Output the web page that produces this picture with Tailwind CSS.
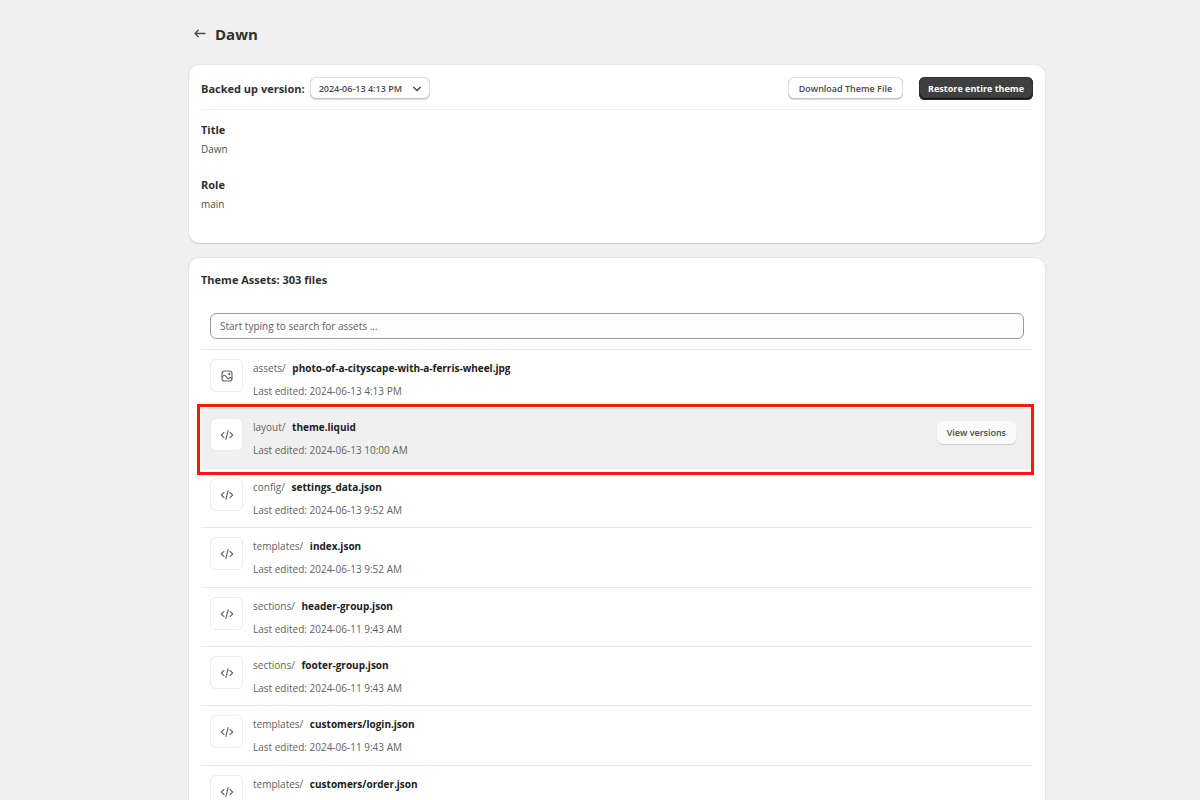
<!DOCTYPE html>
<html lang="en">
<head>
<meta charset="utf-8">
<meta name="viewport" content="width=device-width, initial-scale=1">
<title>Dawn</title>
<script src="https://cdn.jsdelivr.net/npm/@tailwindcss/browser@4"></script>
</head>
<body class="h-screen overflow-hidden bg-[#f0f0f0] pl-[34px] font-['Open_Sans','Noto_Sans',sans-serif] text-[10px] leading-4 text-[#303030]">
<svg class="hidden">
  <symbol id="code" viewBox="0 0 14 14" fill="none" stroke="currentColor" stroke-width="1.1" stroke-linecap="round" stroke-linejoin="round">
    <path d="M4 4.4 1.3 7 4 9.6M10 4.4 12.7 7 10 9.6M8.1 2.6 5.9 11.4"/>
  </symbol>
  <symbol id="image" viewBox="0 0 14 14" fill="none" stroke="currentColor" stroke-width="1.1" stroke-linecap="round" stroke-linejoin="round">
    <rect x="2" y="2" width="10" height="10" rx="2.6"/>
    <path d="M2.2 7.8 3.6 6.6c.5-.4 1.1-.4 1.5 0l2.6 2.7c.4.4 1 .4 1.4 0l.5-.5c.4-.4 1-.4 1.4 0l.9.8"/>
    <path d="M9.3 4.1v1.8M8.4 5h1.8"/>
  </symbol>
</svg>
<main class="mx-auto w-full max-w-[856px] pt-6">
  <header class="flex h-5 items-center gap-2 pl-1">
    <a href="#" aria-label="Back" class="text-[#4a4a4a]">
      <svg class="h-[14px] w-[14px]" viewBox="0 0 14 14" fill="none" stroke="currentColor" stroke-width="1.3" stroke-linecap="round" stroke-linejoin="round"><path d="M12 6.5H2M5.2 3.3 2 6.5l3.2 3.2"/></svg>
    </a>
    <h1 class="text-[15px] font-bold leading-5">Dawn</h1>
  </header>

  <section class="mt-[21px] rounded-[10px] bg-white px-3 pt-3 pb-[31px] shadow-[0_1px_1px_#cfcfcf,0_0_0_1px_#e6e6e6]">
    <div class="flex items-center border-b border-[#f0f0f0] pb-[9px]">
      <label for="version" class="text-[11px] font-bold">Backed up version:</label>
      <div class="relative ml-[5px]">
        <select id="version" class="h-[23px] w-[120px] appearance-none rounded-md bg-white pl-[9px] text-[9px] font-semibold text-[#4a4a4a] shadow-[inset_0_0_0_1px_#dedede,inset_0_-1px_0_1px_#c4c4c4]">
          <option>2024-06-13 4:13 PM</option>
        </select>
        <svg class="pointer-events-none absolute top-[7px] right-2 h-[10px] w-[10px] text-[#4a4a4a]" viewBox="0 0 10 10" fill="none" stroke="currentColor" stroke-width="1.4" stroke-linecap="round" stroke-linejoin="round"><path d="M1.6 3.2 5 6.6l3.4-3.4"/></svg>
      </div>
      <button class="ml-auto h-[23px] rounded-md bg-white px-[11px] text-[9px] font-semibold text-[#4a4a4a] shadow-[inset_0_0_0_1px_#dedede,inset_0_-1px_0_1px_#c4c4c4]">Download Theme File</button>
      <button class="ml-4 h-[23px] rounded-md bg-[#404040] px-[9px] text-[9px] font-bold text-white shadow-[inset_0_0_0_1px_#303030,inset_0_-1px_0_1px_#101010]">Restore entire theme</button>
    </div>
    <dl>
      <dt class="mt-3 text-[11px] font-bold">Title</dt>
      <dd class="mt-[3px] text-[#4f4f4f]">Dawn</dd>
      <dt class="mt-5 text-[11px] font-bold">Role</dt>
      <dd class="mt-[3px] text-[#4f4f4f]">main</dd>
    </dl>
  </section>

  <section class="mt-[15px] rounded-[10px] bg-white px-3 pt-[14px] shadow-[0_1px_1px_#cfcfcf,0_0_0_1px_#e6e6e6]">
    <h2 class="text-[11px] font-bold">Theme Assets: 303 files</h2>
    <div class="px-[9px] pt-[25px] pb-[10px]">
      <input type="text" aria-label="Search assets" placeholder="Start typing to search for assets ..." class="h-[26px] w-full rounded-md border border-[#9a9a9a] bg-[#fdfdfd] px-[9px] placeholder:text-[#616161]">
    </div>
    <ul class="text-[#616161]">
      <li class="flex h-[59px] border-t border-[#e8e8e8] px-[9px] pt-[9px]">
        <span class="flex h-[33px] w-[33px] items-center justify-center rounded-md border border-[#ebebeb] bg-white"><svg class="h-[14px] w-[14px]"><use href="#image"/></svg></span>
        <div class="ml-[10px] pt-px"><p>assets/ <b class="ml-1 text-[#202020]">photo-of-a-cityscape-with-a-ferris-wheel.jpg</b></p><p class="mt-[7px]">Last edited: 2024-06-13 4:13 PM</p></div>
      </li>
      <li class="relative flex h-[60px] border-t border-[#e8e8e8] bg-[#f0f0f0] px-[9px] pt-[9px]">
        <span class="flex h-[33px] w-[33px] items-center justify-center rounded-md border border-[#ebebeb] bg-white"><svg class="h-[14px] w-[14px]"><use href="#code"/></svg></span>
        <div class="ml-[10px] pt-px"><p>layout/ <b class="ml-1 text-[#202020]">theme.liquid</b></p><p class="mt-[7px]">Last edited: 2024-06-13 10:00 AM</p></div>
        <button class="mt-[3px] mr-2 ml-auto h-[23px] rounded-md bg-[#fafafa] px-[10px] text-[9px] font-semibold text-[#4a4a4a] shadow-[0_1px_1px_#cccccc]">View versions</button>
        <div class="pointer-events-none absolute -top-[5px] -right-px -bottom-[7px] -left-1 border-3 border-[#fa1814]"></div>
      </li>
      <li class="flex h-[59px] border-t border-[#e8e8e8] px-[9px] pt-[9px]">
        <span class="flex h-[33px] w-[33px] items-center justify-center rounded-md border border-[#ebebeb] bg-white"><svg class="h-[14px] w-[14px]"><use href="#code"/></svg></span>
        <div class="ml-[10px] pt-px"><p>config/ <b class="ml-1 text-[#202020]">settings_data.json</b></p><p class="mt-[7px]">Last edited: 2024-06-13 9:52 AM</p></div>
      </li>
      <li class="flex h-[60px] border-t border-[#e8e8e8] px-[9px] pt-[9px]">
        <span class="flex h-[33px] w-[33px] items-center justify-center rounded-md border border-[#ebebeb] bg-white"><svg class="h-[14px] w-[14px]"><use href="#code"/></svg></span>
        <div class="ml-[10px] pt-px"><p>templates/ <b class="ml-1 text-[#202020]">index.json</b></p><p class="mt-[7px]">Last edited: 2024-06-13 9:52 AM</p></div>
      </li>
      <li class="flex h-[59px] border-t border-[#e8e8e8] px-[9px] pt-[9px]">
        <span class="flex h-[33px] w-[33px] items-center justify-center rounded-md border border-[#ebebeb] bg-white"><svg class="h-[14px] w-[14px]"><use href="#code"/></svg></span>
        <div class="ml-[10px] pt-px"><p>sections/ <b class="ml-1 text-[#202020]">header-group.json</b></p><p class="mt-[7px]">Last edited: 2024-06-11 9:43 AM</p></div>
      </li>
      <li class="flex h-[59px] border-t border-[#e8e8e8] px-[9px] pt-[9px]">
        <span class="flex h-[33px] w-[33px] items-center justify-center rounded-md border border-[#ebebeb] bg-white"><svg class="h-[14px] w-[14px]"><use href="#code"/></svg></span>
        <div class="ml-[10px] pt-px"><p>sections/ <b class="ml-1 text-[#202020]">footer-group.json</b></p><p class="mt-[7px]">Last edited: 2024-06-11 9:43 AM</p></div>
      </li>
      <li class="flex h-[60px] border-t border-[#e8e8e8] px-[9px] pt-[9px]">
        <span class="flex h-[33px] w-[33px] items-center justify-center rounded-md border border-[#ebebeb] bg-white"><svg class="h-[14px] w-[14px]"><use href="#code"/></svg></span>
        <div class="ml-[10px] pt-px"><p>templates/ <b class="ml-1 text-[#202020]">customers/login.json</b></p><p class="mt-[7px]">Last edited: 2024-06-11 9:43 AM</p></div>
      </li>
      <li class="flex h-[59px] border-t border-[#e8e8e8] px-[9px] pt-[9px]">
        <span class="flex h-[33px] w-[33px] items-center justify-center rounded-md border border-[#ebebeb] bg-white"><svg class="h-[14px] w-[14px]"><use href="#code"/></svg></span>
        <div class="ml-[10px] pt-px"><p>templates/ <b class="ml-1 text-[#202020]">customers/order.json</b></p></div>
      </li>
    </ul>
  </section>
</main>
</body>
</html>
